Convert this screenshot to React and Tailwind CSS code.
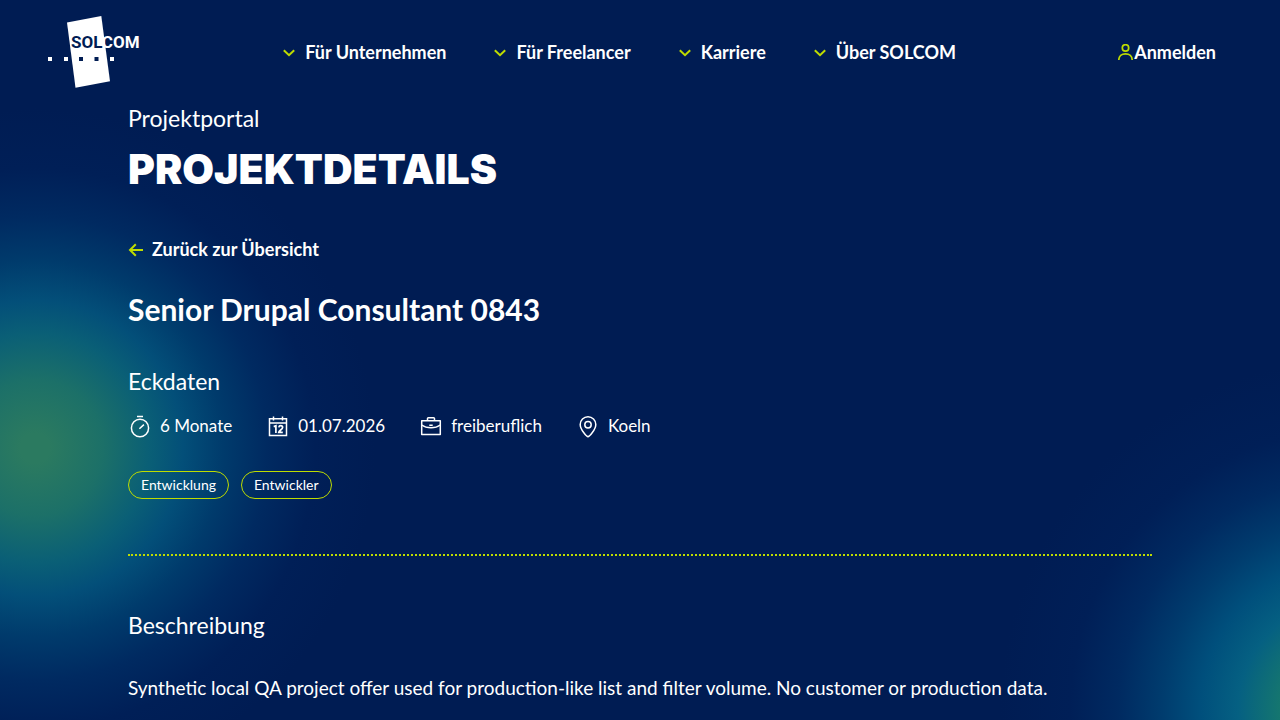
const navItems = ["Für Unternehmen", "Für Freelancer", "Karriere", "Über SOLCOM"];

function Logo() {
  return (
    <svg className="h-[72px] w-[93px]" viewBox="48 16 93 72" role="img" aria-label="SOLCOM">
      <polygon points="67,22.5 101.3,16 110,81.3 75.5,87.7" fill="#fff" />
      <text x="71" y="48" fontFamily="Roboto, sans-serif" fontWeight="700" fontSize="17" fill="#001c53">
        SOL<tspan fill="#fff">COM</tspan>
      </text>
      <rect x="48" y="57" width="4" height="4" fill="#fff" />
      <rect x="64" y="57" width="4" height="4" fill="#fff" />
      <rect x="79" y="57" width="4" height="4" fill="#001c53" />
      <rect x="94.5" y="57" width="4" height="4" fill="#001c53" />
      <rect x="110" y="57" width="4" height="4" fill="#fff" />
    </svg>
  );
}

function ChevronIcon() {
  return (
    <svg className="mt-0.5 h-2 w-3" viewBox="0 0 12 8" fill="none" stroke="#bedc00" strokeWidth="2" aria-hidden="true">
      <path d="M0.8 1.2 6 6.2l5.2-5" />
    </svg>
  );
}

function UserIcon() {
  return (
    <svg className="size-4" viewBox="0 0 16 16" fill="none" stroke="#bedc00" strokeWidth="1.7" aria-hidden="true">
      <circle cx="7.5" cy="3.9" r="3.2" />
      <path d="M0.8 16c0-4 2.9-6.2 6.7-6.2s6.7 2.2 6.7 6.2" />
    </svg>
  );
}

function StopwatchIcon() {
  return (
    <svg className="size-6" viewBox="0 0 24 24" fill="none" stroke="#fff" strokeWidth="1.5" aria-hidden="true">
      <ellipse cx="12" cy="14" rx="8.6" ry="8.8" />
      <path d="M9 2.4h6M11.4 14.8l4.5-4.2" />
    </svg>
  );
}

function CalendarIcon() {
  return (
    <svg className="size-6" viewBox="0 0 24 24" fill="none" stroke="#fff" strokeWidth="1.5" aria-hidden="true">
      <path d="M3.5 4.8h17v16.7h-17zM3.5 9h17M7.5 2.5v4M16.5 2.5v4" />
      <path d="M7.7 12.6 9.9 11.8v7.2M12.8 13.4c.2-1.2 1-1.7 1.9-1.7 1.1 0 1.9.6 1.9 1.7 0 1.7-3.4 3.2-3.8 4.9h4" strokeWidth="1.7" />
    </svg>
  );
}

function BriefcaseIcon() {
  return (
    <svg className="size-6" viewBox="0 0 24 24" fill="none" stroke="#fff" strokeWidth="1.5" strokeLinejoin="round" aria-hidden="true">
      <path d="M2.7 6.8h18.6v13.7H2.7zM8.5 6.8V4.6c0-.5.3-.9.9-.9h5.2c.6 0 .9.4.9.9v2.2" />
      <path d="M2.7 11c5 3.7 13.6 3.7 18.6 0M10.3 11.2h3.4" />
    </svg>
  );
}

function PinIcon() {
  return (
    <svg className="size-6" viewBox="0 0 24 24" fill="none" stroke="#fff" strokeWidth="1.5" strokeLinejoin="round" aria-hidden="true">
      <path d="M12 22.7c-1.2 0-7.8-7-7.8-12.2A7.8 7.8 0 0 1 12 2.7a7.8 7.8 0 0 1 7.8 7.8c0 5.2-6.6 12.2-7.8 12.2Z" />
      <circle cx="12" cy="10.7" r="3.2" />
    </svg>
  );
}

const facts = [
  { icon: StopwatchIcon, text: "6 Monate" },
  { icon: CalendarIcon, text: "01.07.2026" },
  { icon: BriefcaseIcon, text: "freiberuflich" },
  { icon: PinIcon, text: "Koeln" },
];

export default function App() {
  return (
    <div className="min-h-screen bg-[#001c53] bg-[radial-gradient(circle_at_35px_448px,#2b7a60_0px,#2b7a60_15px,#1c7068_68px,#0a5f76_115px,#034f79_148px,#003b6c_188px,#002a61_232px,#001f57_280px,#001c5300_340px),radial-gradient(circle_at_1350px_710px,#2b7a60_0px,#15766f_70px,#056082_112px,#004f7c_150px,#003c6e_188px,#002a61_232px,#001f57_280px,#001c5300_350px)] font-[Lato,'Open_Sans',sans-serif] text-white">
      <header className="flex items-center justify-between pt-4 pr-16 pl-12">
        <a href="#start"><Logo /></a>
        <nav className="flex gap-12 pr-5">
          {navItems.map((label) => (
            <button key={label} type="button" className="flex items-center gap-[10px] text-lg font-bold">
              <ChevronIcon />
              {label}
            </button>
          ))}
        </nav>
        <a href="#anmelden" className="flex items-center text-lg font-bold">
          <UserIcon />
          Anmelden
        </a>
      </header>

      <main className="px-32 pt-[14px] pb-5">
        <p className="text-[23px] leading-8">Projektportal</p>
        <h1 className="mt-2 font-[Inter,sans-serif] text-[41px] leading-[54px] font-black">PROJEKTDETAILS</h1>

        <a href="#uebersicht" className="mt-[41px] flex w-fit items-center gap-2 text-lg leading-6 font-bold">
          <svg className="mt-0.5 size-4" viewBox="0 0 16 16" fill="none" stroke="#bedc00" strokeWidth="2" aria-hidden="true">
            <path d="M15 8H2M7.8 2.2 2 8l5.8 5.8" />
          </svg>
          Zurück zur Übersicht
        </a>

        <h2 className="mt-7 text-[30px] leading-10 font-bold">Senior Drupal Consultant 0843</h2>

        <h3 className="mt-9 text-[23px] leading-8">Eckdaten</h3>
        <ul className="mt-[17px] flex flex-wrap gap-x-[34px]">
          {facts.map(({ icon: Icon, text }) => (
            <li key={text} className="flex items-center gap-2 text-[17px] leading-6">
              <Icon />
              {text}
            </li>
          ))}
        </ul>
        <ul className="mt-[33px] flex gap-3 text-sm">
          {["Entwicklung", "Entwickler"].map((tag) => (
            <li key={tag} className="flex h-7 items-center rounded-full border border-[#bedc00] px-3">{tag}</li>
          ))}
        </ul>

        <hr className="mt-[55px] border-t-2 border-dotted border-[#bedc00]" />

        <h3 className="mt-[53px] text-[23px] leading-8">Beschreibung</h3>
        <p className="mt-[31px] text-[19px] leading-8">
          Synthetic local QA project offer used for production-like list and filter volume. No customer or production data.
        </p>
      </main>
    </div>
  );
}
